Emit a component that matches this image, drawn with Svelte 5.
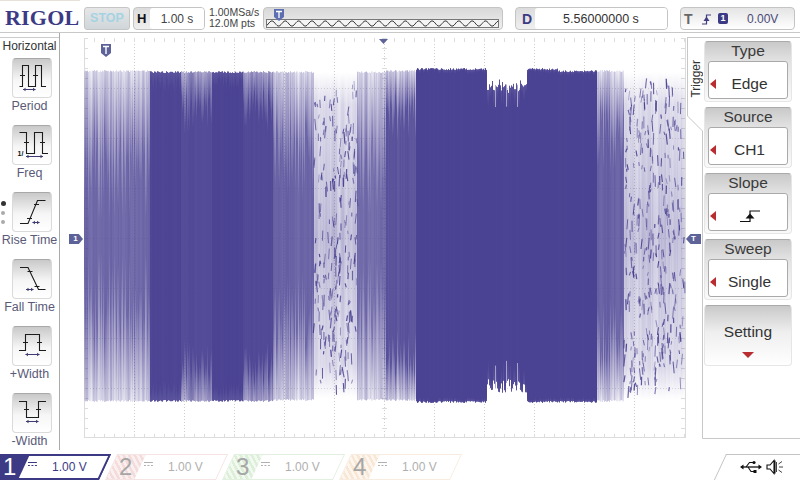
<script>
	import { onMount } from 'svelte';

	let plot;

	const leftMenu = [
		{ label: 'Period', lines: ['M7.5 28.5H10.5V7.5H16.5V28.5H23.5V7.5H29.5V28.5H34', 'M8 17.5H13M21 17.5H26'], arrow: [11, 23.5, 31.5] },
		{ label: 'Freq', lines: ['M7.5 7.5H14.5V28.5H22.5V7.5H30.5V28.5H36', 'M12 17.5H17M28 17.5H33'], arrow: [14, 31, 31.5], frac: true },
		{ label: 'Rise Time', lines: ['M8 31.5H16L25.5 8.5H33.5', 'M15 26.5H20M22 12.5H27'], arrow: [20.5, 27.5, 30.5], dots: true },
		{ label: 'Fall Time', lines: ['M8 8.5H16L26.5 30.5H33.5', 'M15.5 12.5H20.5M22.5 27.5H27.5'], arrow: [14, 21.5, 30.5] },
		{ label: '+Width', lines: ['M7 24.5H13.5V8.5H27.5V24.5H34', 'M11 16.5H16M25 16.5H30'], arrow: [13.5, 27.5, 28.5] },
		{ label: '-Width', lines: ['M7 8.5H14.5V24.5H26.5V8.5H34', 'M12 16.5H17M24 16.5H29'], arrow: [14, 26.5, 28.5] }
	];

	const softKeys = [
		{ title: 'Type', value: 'Edge' },
		{ title: 'Source', value: 'CH1' },
		{ title: 'Slope', icon: true },
		{ title: 'Sweep', value: 'Single' }
	];

	const channels = [
		{ n: 1, cls: 'ch1' },
		{ n: 2, cls: 'ch2' },
		{ n: 3, cls: 'ch3' },
		{ n: 4, cls: 'ch4' }
	];

	// memory depth strip, 231px of sine
	let memoryWave = 'M0 4';
	for (let x = 0; x <= 231; x += 1) {
		memoryWave += `L${x} ${(3.5 + 2.6 * Math.sin((x / 13.35) * Math.PI * 2 + 2.4)).toFixed(2)}`;
	}

	const segments = [
		{ from: 84, to: 150, mid: 0.8, top: 70, bottom: 402, fade: 110 },
		{ from: 150, to: 181, mid: 0.98, top: 71, bottom: 402, fade: 14 },
		{ from: 181, to: 212, mid: 0.95, top: 71, bottom: 402, fade: 45 },
		{ from: 212, to: 243, mid: 0.99, top: 71, bottom: 402, fade: 12 },
		{ from: 243, to: 273, mid: 0.96, top: 71, bottom: 402, fade: 40 },
		{ from: 273, to: 314, mid: 0.82, top: 71, bottom: 401, fade: 90 },
		{ from: 314, to: 357, sparse: true, top: 72, bottom: 398 },
		{ from: 357, to: 386, mid: 0.78, top: 71, bottom: 401, fade: 100 },
		{ from: 386, to: 416, mid: 0.9, top: 70, bottom: 401, fade: 50 },
		{ from: 416, to: 487, mid: 1, top: 68, bottom: 403, fade: 3 },
		{ from: 487, to: 527, mid: 1, top: 78, bottom: 393, fade: 14, notch: true },
		{ from: 527, to: 558, mid: 1, top: 68, bottom: 403, fade: 3 },
		{ from: 558, to: 597, mid: 1, top: 70, bottom: 403, fade: 3 },
		{ from: 597, to: 624, mid: 0.84, top: 70, bottom: 402, fade: 70 },
		{ from: 624, to: 685, sparse: true, top: 72, bottom: 400 }
	];

	function drawGrid(ctx, w, h) {
		ctx.fillStyle = '#cfcfcf';
		for (let x = 50; x < w - 2; x += 50) {
			for (let y = 0; y < h; y += 3) ctx.fillRect(x, y, 1, 1);
		}
		ctx.fillStyle = '#dcdcdc';
		for (let y = 50; y < h; y += 50) {
			for (let x = 0; x < w; x += 3) ctx.fillRect(x, y, 1, 1);
		}
		ctx.fillRect(0, 0, 1, h);
		ctx.fillRect(w - 1, 0, 1, h);
		ctx.fillRect(0, h - 1, w, 1);
		for (let x = 0; x <= w; x += 10) {
			ctx.fillRect(x, 0, 1, 4);
			ctx.fillRect(x, h - 4, 1, 4);
		}
		for (let y = 0; y <= h; y += 10) {
			ctx.fillRect(0, y, 4, 1);
			ctx.fillRect(w - 5, y, 4, 1);
			ctx.fillRect(298, y, 5, 1);
		}
	}

	function drawTrace(ctx) {
		let seed = 0x2f6e2b1;
		const rnd = () => {
			seed ^= seed << 13;
			seed ^= seed >>> 17;
			seed ^= seed << 5;
			return (seed >>> 0) / 4294967296;
		};
		const ox = 84;
		const oy = 38;
		const dark = (a) => `rgba(74,66,146,${a})`;
		let streak = 0.5;
		for (const s of segments) {
			for (let x = s.from; x < s.to; x++) {
				streak = streak * 0.45 + rnd() * 0.55;
				const wob = rnd();
				if (s.sparse) {
					const g = ctx.createLinearGradient(0, s.top - oy, 0, s.bottom - oy);
					const a = 0.2 + streak * 0.22;
					g.addColorStop(0, dark(0));
					g.addColorStop(0.1, dark(a * 0.6));
					g.addColorStop(0.5, dark(a + 0.03));
					g.addColorStop(0.9, dark(a * 0.6));
					g.addColorStop(1, dark(0));
					ctx.fillStyle = g;
					ctx.fillRect(x - ox, s.top - oy, 1, s.bottom - s.top);
					continue;
				}
				const jit = s.notch ? Math.abs(Math.sin(x * 0.9)) * 7 + wob * 8 : wob * 2;
				const top = s.top + jit - oy;
				const bottom = s.bottom - (s.notch ? wob * 14 : wob * 2) - oy;
				const fade = s.fade * (0.55 + wob * 0.9);
				const solid = s.mid > 0.97;
				const edge = solid ? 0.9 : s.mid > 0.9 ? s.mid * (0.35 + streak * 0.4) : s.mid * (0.06 + streak * 0.5);
				const mid = Math.min(1, s.mid + (streak - 0.5) * (s.mid > 0.9 ? 0.03 : 0.1));
				const f = Math.min(0.45, fade / (bottom - top));
				const g = ctx.createLinearGradient(0, top, 0, bottom);
				g.addColorStop(0, dark(edge));
				g.addColorStop(f, dark(mid));
				g.addColorStop(1 - f, dark(mid));
				g.addColorStop(1, dark(edge));
				ctx.fillStyle = g;
				ctx.fillRect(x - ox, top, 1, bottom - top);
				if (s.notch && x % 11 === 0) {
					ctx.fillStyle = 'rgba(255,255,255,0.5)';
					ctx.fillRect(x - ox, top, 1, 22);
					ctx.fillRect(x - ox, bottom - 22, 1, 22);
				}
			}
			if (s.sparse) {
				const count = (s.to - s.from) * 5.5;
				ctx.strokeStyle = '#453d8e';
				for (let i = 0; i < count; i++) {
					const x = s.from + rnd() * (s.to - s.from) - ox;
					const y = s.top + 6 + rnd() * (s.bottom - s.top - 18) - oy;
					const len = 3 + rnd() * 9;
					ctx.lineWidth = 0.8 + rnd() * 0.5;
					ctx.globalAlpha = 0.45 + rnd() * 0.5;
					ctx.beginPath();
					ctx.moveTo(x, y);
					ctx.lineTo(x + (rnd() - 0.5) * 2.5, y + len);
					ctx.stroke();
				}
				ctx.globalAlpha = 1;
			}
		}
	}

	onMount(() => {
		const ctx = plot.getContext('2d');
		drawGrid(ctx, plot.width, plot.height);
		const off = document.createElement('canvas');
		off.width = plot.width;
		off.height = plot.height;
		drawTrace(off.getContext('2d'));
		ctx.filter = 'blur(0.6px)';
		ctx.drawImage(off, 0, 0);
	});
</script>

<div class="scope">
	<header class="top">
		<div class="logo">RIGOL</div>
		<div class="stop">STOP</div>
		<div class="box h-box"><b>H</b><span class="inner">1.00 s</span></div>
		<div class="rate">1.00MSa/s<br />12.0M pts</div>
		<div class="memory">
			<svg class="mem-t" width="10" height="12" viewBox="0 0 10 12"><path d="M0 0H10V8L5 12L0 8Z" fill="#5d6fb0" /><path d="M2 2.5H8M5 2.5V9" stroke="#fff" stroke-width="1.3" /></svg>
			<div class="mem-strip">
				<svg width="231" height="7" viewBox="0 0 231 7"><path d={memoryWave} fill="none" stroke="#222" stroke-width="0.9" /></svg>
			</div>
		</div>
		<div class="box d-box"><b>D</b><span class="inner">5.56000000 s</span></div>
		<div class="box t-box">
			<b>T</b>
			<svg width="9" height="12" viewBox="0 0 9 12"><path d="M0 11H4.5V2H9" fill="none" stroke="#3f3d80" stroke-width="1.2" /><path d="M4.5 3.5L7.5 8H1.5Z" fill="#3f3d80" /></svg>
			<span class="chip">1</span>
			<span class="tval">0.00V</span>
		</div>
	</header>

	<div class="main">
		<aside class="left">
			<div class="left-title">Horizontal</div>
			{#each leftMenu as item}
				<div class="item">
					{#if item.dots}
						<div class="dots"><i class="on"></i><i></i><i></i></div>
					{/if}
					<div class="btn">
						<svg width="40" height="40" viewBox="0 0 40 40" fill="none" stroke="#1c1c1c" stroke-width="1.1">
							{#each item.lines as d}<path {d} />{/each}
							<path d="M{item.arrow[0]} {item.arrow[2]}H{item.arrow[1]}" stroke="#3d3b70" />
							<path d="M{item.arrow[0]} {item.arrow[2]}l2.5 -1.8v3.6ZM{item.arrow[1]} {item.arrow[2]}l-2.5 -1.8v3.6Z" fill="#3d3b70" stroke="none" />
							{#if item.frac}<text x="5.5" y="31" class="frac">1/</text>{/if}
						</svg>
					</div>
					<div class="label">{item.label}</div>
				</div>
			{/each}
		</aside>

		<div class="plot-wrap">
			<canvas bind:this={plot} width="602" height="400"></canvas>
			<svg class="mark mark-t" width="10" height="13" viewBox="0 0 10 13"><path d="M0 0H10V9L5 13L0 9Z" fill="#5d6298" /><path d="M2 2.5H8M5 2.5V10" stroke="#fff" stroke-width="1.4" /></svg>
			<svg class="mark mark-c" width="9" height="5" viewBox="0 0 9 5"><path d="M0 0H9L4.5 5Z" fill="#5d6298" /></svg>
			<div class="mark mark-1">1</div>
			<div class="mark mark-r">T</div>
		</div>

		<aside class="right">
			<div class="trigger">Trigger</div>
			<svg class="rail" width="113" height="401" viewBox="0 0 113 401"><path d="M0.5 0V78L15.5 93V400.5H113" fill="none" stroke="#c8c8c8" /></svg>
			<div class="keys">
				{#each softKeys as k}
					<div class="key">
						<div class="key-title">{k.title}</div>
						<div class="key-val">
							<span class="tri"></span>
							{#if k.icon}
								<svg width="20" height="12" viewBox="0 0 20 12"><path d="M0 11.5H10V1H20" fill="none" stroke="#111" stroke-width="1.2" /><path d="M10 3.5L14.5 8.5H5.5Z" fill="#111" /></svg>
							{:else}
								{k.value}
							{/if}
						</div>
					</div>
				{/each}
				<div class="key setting">
					<div>Setting</div>
					<span class="down"></span>
				</div>
			</div>
		</aside>
	</div>

	<footer class="bottom">
		{#each channels as c}
			<div class="chan {c.cls}">
				<div class="num"><span>{c.n}</span></div>
				<div class="scale">
					<svg width="9" height="6" viewBox="0 0 9 6"><path d="M0 0.5H9M0 3.5H2M3.5 3.5H5.5M7 3.5H9" stroke="currentColor" fill="none" /></svg>
					<span>1.00 V</span>
				</div>
			</div>
		{/each}
		<div class="status">
			<svg width="22" height="14" viewBox="0 0 22 14">
				<path d="M3 7H20" stroke="#111" stroke-width="1.3" />
				<path d="M0 7l3.5 -2.5v5ZM22 7l-3.5 -2.5v5Z" fill="#111" />
				<path d="M6 7L9.5 2.5H13M8 7L11 11.5H14" fill="none" stroke="#111" stroke-width="1.1" />
				<circle cx="14" cy="2.5" r="1.6" fill="#111" /><rect x="13.5" y="10" width="3" height="3" fill="#111" />
			</svg>
			<svg width="18" height="16" viewBox="0 0 18 16" fill="none" stroke="#111" stroke-width="1.1">
				<path d="M1 6V10H4L8 14.5V1.5L4 6ZM9 1.5V14.5" />
				<path d="M10.5 3V13M13 8H17M12.5 5L16 2.5M12.5 11L16 13.5" stroke-width="0.8" />
			</svg>
		</div>
	</footer>
</div>

<style>
	:global(body) {
		background: #fff;
	}

	.scope {
		width: 800px;
		height: 480px;
		display: flex;
		flex-direction: column;
		overflow: hidden;
		background: #fff;
		font-family: 'Liberation Sans', Arial, sans-serif;
		color: #222;
	}

	.top {
		position: relative;
		height: 33px;
		box-sizing: border-box;
		border-bottom: 1px solid #c8c8c8;
		padding: 7px 0 2px 5px;
		display: flex;
		align-items: stretch;
		flex: none;
	}

	.top::before {
		content: '';
		position: absolute;
		left: 0;
		top: 0;
		width: 80px;
		height: 1px;
		background: #e6e2da;
	}

	.logo {
		width: 79px;
		font-family: 'Liberation Serif', serif;
		font-weight: 700;
		font-size: 22px;
		line-height: 22px;
		letter-spacing: 0.2px;
		color: #3c3a84;
	}

	.stop {
		width: 46px;
		box-sizing: border-box;
		border: 1px solid #c5c5c5;
		border-radius: 3px;
		background: linear-gradient(#e6e6e6, #cfd6da);
		color: #a5d3e2;
		font-size: 12.5px;
		font-weight: 700;
		text-align: center;
		line-height: 21px;
		margin-right: 3px;
	}

	.box {
		box-sizing: border-box;
		border: 1px solid #c4c4c4;
		border-radius: 4px;
		background: linear-gradient(#dcdcdc, #efefef);
		display: flex;
		align-items: center;
	}

	.box b {
		font-size: 13px;
		line-height: 1;
	}

	.inner {
		flex: 1;
		align-self: stretch;
		background: #fff;
		border-radius: 3px;
		text-align: center;
		font-size: 12px;
		line-height: 22px;
		color: #444;
	}

	.h-box {
		width: 72px;
		padding-left: 3px;
	}

	.h-box b {
		width: 13px;
		color: #111;
	}

	.rate {
		width: 55px;
		padding-left: 4px;
		box-sizing: border-box;
		font-size: 10.5px;
		line-height: 11px;
		color: #444;
		white-space: nowrap;
	}

	.memory {
		position: relative;
		width: 240px;
		box-sizing: border-box;
		border: 1px solid #c4c4c4;
		border-radius: 4px;
		background: linear-gradient(#d8d8d8, #f0f0f0);
		margin-left: 3px;
		padding: 11px 0 0 2px;
	}

	.mem-t {
		position: absolute;
		left: 10px;
		top: 1px;
	}

	.mem-strip {
		width: 233px;
		height: 9px;
		box-sizing: border-box;
		border: 1px solid #777;
		background: #f4f4f4;
	}

	.mem-strip svg {
		display: block;
	}

	.d-box {
		width: 153px;
		margin-left: 12px;
		padding-left: 6px;
	}

	.d-box b {
		width: 13px;
		font-size: 14px;
		color: #3c3a84;
	}

	.d-box .inner {
		color: #333;
		font-size: 12.5px;
	}

	.t-box {
		width: 115px;
		margin-left: 12px;
		padding-left: 3px;
		background: linear-gradient(#e4e4e4, #fff);
	}

	.t-box b {
		color: #666;
		width: 18px;
		font-size: 14px;
	}

	.chip {
		width: 10px;
		height: 11px;
		margin-left: 7px;
		border-radius: 2px;
		background: #3c3a84;
		color: #fff;
		font-size: 9px;
		font-weight: 700;
		line-height: 11px;
		text-align: center;
	}

	.tval {
		margin-left: 19px;
		font-size: 12px;
		color: #4a4a78;
	}

	.main {
		flex: none;
		height: 417px;
		display: flex;
		align-items: flex-start;
	}

	.left {
		width: 60px;
		height: 417px;
		margin-right: 24px;
		box-sizing: border-box;
		border-right: 1px solid #aaa;
		padding-top: 4px;
		flex: none;
	}

	.left-title {
		font-size: 12px;
		line-height: 16px;
		color: #333;
		text-align: center;
		margin-bottom: 4px;
		border-top: 1px solid #ccc;
	}

	.item {
		position: relative;
		height: 67px;
		display: flex;
		flex-direction: column;
		align-items: center;
	}

	.dots {
		position: absolute;
		left: 1px;
		top: 9px;
		display: flex;
		flex-direction: column;
		gap: 5px;
	}

	.dots i {
		display: block;
		width: 4px;
		height: 4px;
		border-radius: 50%;
		background: #aaa;
	}

	.dots i.on {
		width: 5px;
		height: 5px;
		background: #333;
		margin-left: -0.5px;
	}

	.btn {
		width: 40px;
		height: 40px;
		box-sizing: border-box;
		margin-left: 5px;
		border: 1px solid #dadada;
		border-top-color: #a8a8a8;
		border-radius: 4px;
		background: linear-gradient(#c9c9c9, #f6f6f6 55%, #fff);
		overflow: hidden;
	}

	.btn svg {
		display: block;
		margin: -1px;
	}

	.frac {
		font-size: 7px;
		font-family: 'Liberation Sans', sans-serif;
		fill: #111;
		stroke: none;
		font-weight: 700;
	}

	.label {
		margin-top: 1px;
		font-size: 12.5px;
		line-height: 14px;
		color: #5a5a78;
		white-space: nowrap;
	}

	.plot-wrap {
		position: relative;
		flex: none;
		width: 602px;
		height: 400px;
		margin-top: 5px;
	}

	canvas {
		display: block;
	}

	.mark {
		position: absolute;
	}

	.mark-t {
		left: 17px;
		top: 6px;
	}

	.mark-c {
		left: 295px;
		top: 1px;
	}

	.mark-1,
	.mark-r {
		width: 14px;
		height: 10px;
		top: 196px;
		background: #5d6298;
		color: #fff;
		font-size: 8px;
		font-weight: 700;
		line-height: 10px;
		text-align: center;
	}

	.mark-1 {
		left: -15px;
		clip-path: polygon(0 0, 70% 0, 100% 50%, 70% 100%, 0 100%);
		padding-right: 1px;
		box-sizing: border-box;
	}

	.mark-r {
		left: 602px;
		width: 15px;
		clip-path: polygon(30% 0, 100% 0, 100% 100%, 30% 100%, 0 50%);
	}

	.right {
		position: relative;
		flex: 1;
		height: 401px;
		margin-top: 4px;
		margin-left: 1px;
		border-top: 1px solid #c8c8c8;
		box-sizing: border-box;
		padding: 3px 0 0 17px;
	}

	.rail {
		position: absolute;
		left: 0;
		top: 0;
	}

	.trigger {
		position: absolute;
		left: 1px;
		top: 22px;
		writing-mode: vertical-rl;
		transform: rotate(180deg);
		font-size: 12px;
		line-height: 16px;
		color: #333;
	}

	.keys {
		display: flex;
		flex-direction: column;
		gap: 5px;
	}

	.key {
		width: 88px;
		height: 61px;
		box-sizing: border-box;
		border: 1px solid #e6e6e6;
		border-top-color: #aaa;
		border-radius: 4px;
		background: linear-gradient(#c9c9c9, #e2e2e2 32%, #fafafa);
		padding: 0 3px;
	}

	.key-title {
		height: 19px;
		font-size: 15.5px;
		line-height: 17px;
		text-align: center;
		color: #3a3a3a;
	}

	.key-val {
		position: relative;
		height: 38px;
		box-sizing: border-box;
		border: 1px solid #aaa;
		border-radius: 3px;
		background: #fff;
		font-size: 15.5px;
		line-height: 18px;
		color: #333;
		display: flex;
		align-items: center;
		justify-content: center;
		padding: 7px 0 0 3px;
	}

	.tri {
		position: absolute;
		left: 1px;
		top: 17px;
		width: 0;
		height: 0;
		border-top: 5px solid transparent;
		border-bottom: 5px solid transparent;
		border-right: 6px solid #b92c30;
	}

	.setting {
		text-align: center;
		font-size: 15.5px;
		padding-top: 17px;
		background: linear-gradient(#c9c9c9, #efefef 45%, #fff);
		color: #333;
	}

	.down {
		display: block;
		width: 0;
		margin: 11px auto 0;
		border-left: 6px solid transparent;
		border-right: 6px solid transparent;
		border-top: 6px solid #b92c30;
	}

	.bottom {
		flex: 1;
		position: relative;
		padding-top: 4px;
		display: flex;
		gap: 6px;
		margin-left: -6px;
	}

	.chan {
		width: 111px;
		height: 26px;
		box-sizing: border-box;
		transform: skewX(-25deg);
		display: flex;
		border: 2px solid;
		flex: none;
	}

	.num {
		width: 28px;
		flex: none;
		display: flex;
		align-items: center;
		justify-content: center;
	}

	.num span {
		transform: skewX(25deg);
		font-size: 24px;
		line-height: 24px;
	}

	.scale {
		flex: 1;
		display: flex;
		align-items: center;
		background: #fff;
		padding-left: 3px;
	}

	.scale svg,
	.scale span {
		transform: skewX(25deg);
	}

	.scale svg {
		margin-bottom: 5px;
	}

	.scale span {
		margin-left: 16px;
		font-size: 12px;
	}

	.ch1 {
		border-color: #3c3a84;
		background: #3c3a84;
		color: #3c3a84;
	}

	.ch1 .num span {
		color: #fff;
	}

	.ch2,
	.ch3,
	.ch4 {
		border-width: 1px;
		color: #b0b0b0;
	}

	.ch2 {
		border-color: #f6e3e3;
		background: repeating-linear-gradient(45deg, #f5dcdc 0 2px, #fbf0f0 2px 4px);
	}

	.ch3 {
		border-color: #e2f0df;
		background: repeating-linear-gradient(45deg, #ddeed9 0 2px, #f2f9f0 2px 4px);
	}

	.ch4 {
		border-color: #f7ecdf;
		background: repeating-linear-gradient(45deg, #f7e7d4 0 2px, #fcf6ee 2px 4px);
	}

	.ch2 .num span,
	.ch3 .num span,
	.ch4 .num span {
		color: #a6a6a6;
	}

	.status {
		position: absolute;
		right: 0;
		top: 4px;
		width: 86px;
		height: 26px;
		box-sizing: border-box;
		padding-left: 26px;
		display: flex;
		align-items: center;
		gap: 4px;
	}

	.status::before {
		content: '';
		position: absolute;
		left: 12px;
		top: 0;
		width: 100%;
		height: 100%;
		border-top: 1px solid #c4c4c4;
		border-left: 1px solid #c4c4c4;
		transform: skewX(-25deg);
		transform-origin: 0 0;
		box-sizing: border-box;
	}
</style>
